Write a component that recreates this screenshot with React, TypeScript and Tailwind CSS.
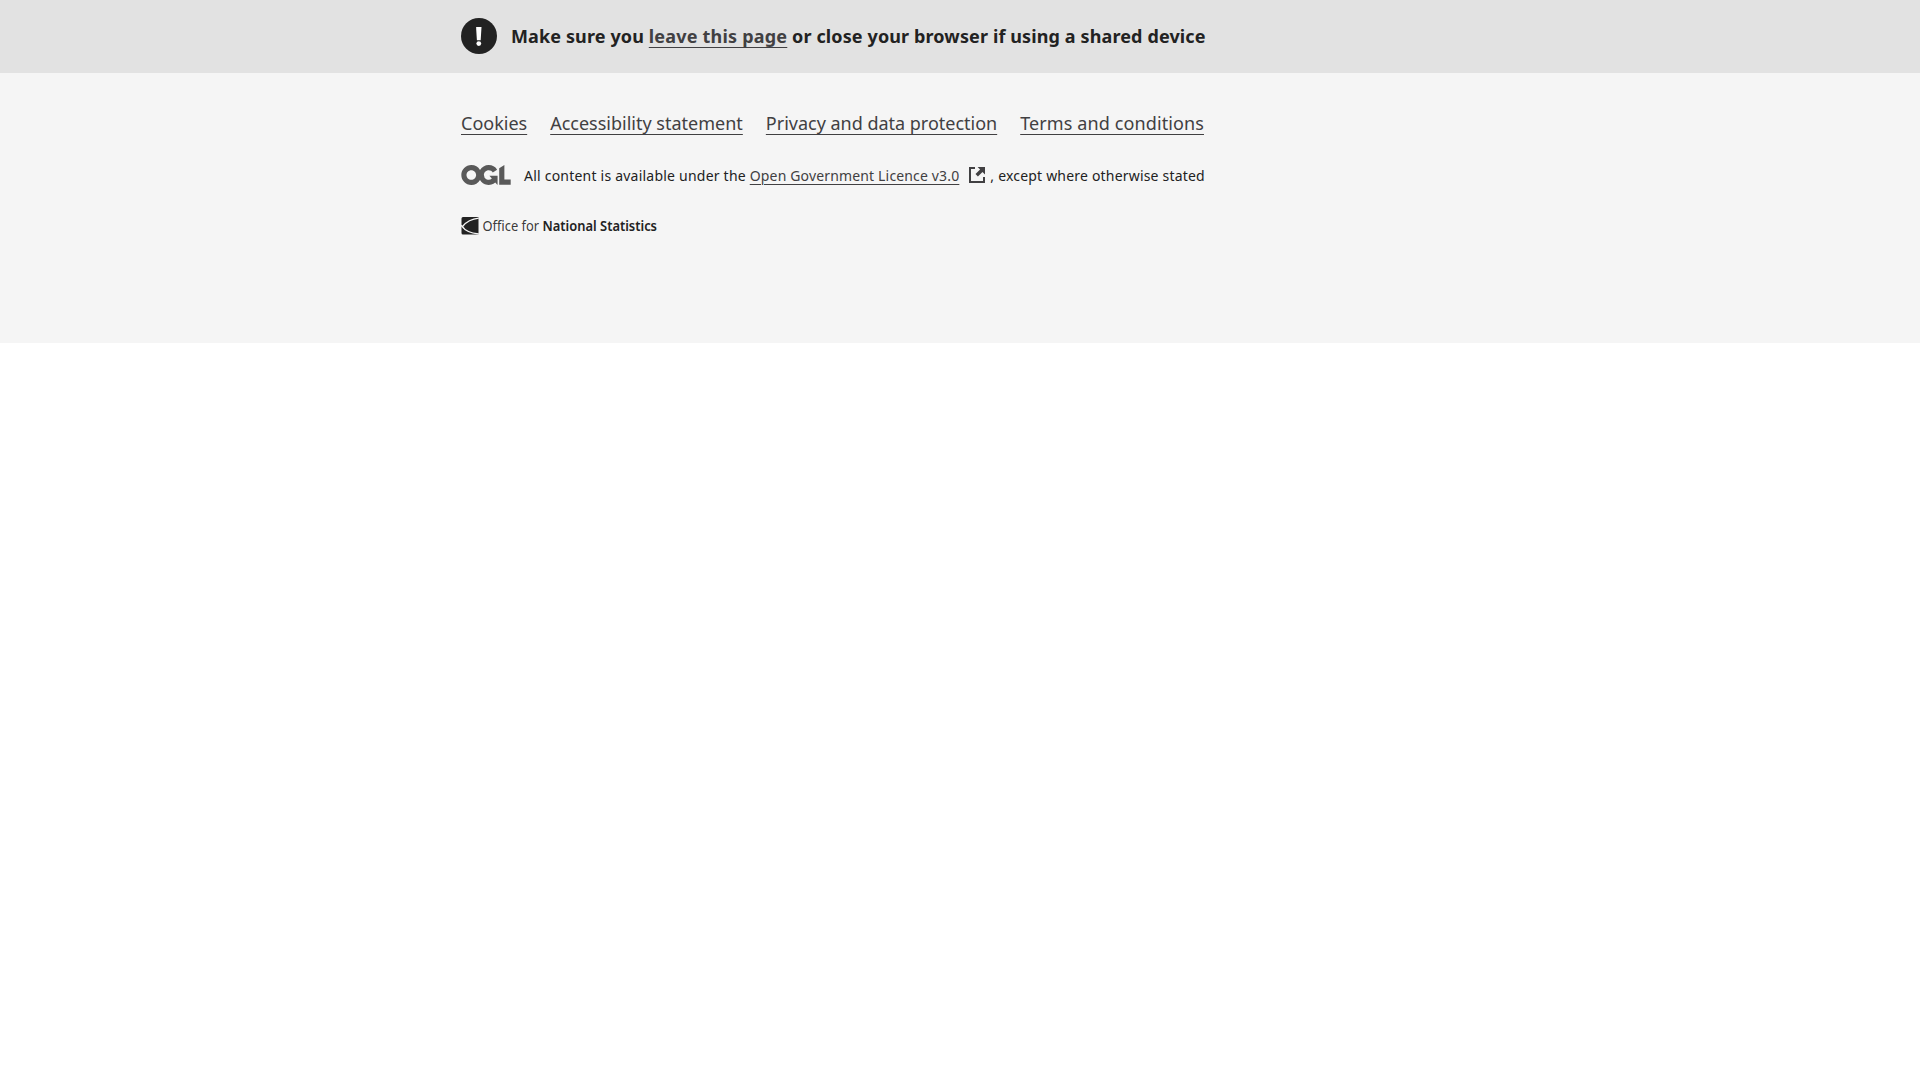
const link = 'text-[#414042] underline decoration-1';

function AlertIcon() {
  return (
    <span className="flex h-9 w-9 shrink-0 items-center justify-center rounded-full bg-[#222222] text-white">
      <svg width="36" height="36" viewBox="0 0 36 36" fill="currentColor" aria-hidden="true">
        <path d="M15.1 9h5.4l-.8 13.3h-3.8z" />
        <circle cx="17.8" cy="25.6" r="2.4" />
      </svg>
    </span>
  );
}

function OglLogo() {
  return (
    <svg className="h-[20px] w-[50px] shrink-0" viewBox="0 0 483.2 195.7" fill="#595959" aria-hidden="true">
      <path d="M421.5 142.8V.1l-50.7 32.3v161.1h112.4v-50.7zm-122.3-9.6A47.12 47.12 0 0 1 221 97.8c0-26 21.1-47.1 47.1-47.1 16.7 0 31.4 8.7 39.7 21.8l42.7-27.2A97.63 97.63 0 0 0 268.1 0c-36.5 0-68.3 20.1-85.1 49.7A98 98 0 0 0 97.8 0C43.9 0 0 43.9 0 97.8s43.9 97.8 97.8 97.8c36.5 0 68.3-20.1 85.1-49.7a97.76 97.76 0 0 0 149.6 25.4l19.4 22.2h3v-87.8h-80l24.3 27.5zM97.8 145c-26 0-47.1-21.1-47.1-47.1s21.1-47.1 47.1-47.1 47.1 21.1 47.1 47.1S123.8 145 97.8 145" />
    </svg>
  );
}

function ExternalIcon() {
  return (
    <svg className="ml-[10px] mr-[5px] inline-block h-4 w-4 align-[-2px]" viewBox="0 0 16 16" aria-hidden="true">
      <path d="M6 1H1v14h14v-5" fill="none" stroke="#414042" strokeWidth="2" />
      <path d="M8.6 0H16v7.4l-2.5-2.5-4.6 4.6-2.4-2.4 4.6-4.6z" fill="#414042" />
    </svg>
  );
}

function OnsLogo() {
  return (
    <svg className="block h-[36px] w-[240px] overflow-visible" viewBox="0 -10 240 36" fill="#222222" role="img" aria-label="Office for National Statistics">
      <path d="M2 0h15.5v17.5H2A1.5 1.5 0 0 1 .5 16V1.5A1.5 1.5 0 0 1 2 0z" />
      <path d="M17.8 1.2C10.5 2 5 5.2 1.5 9.5c2 3.8 8 6.5 16.3 7.5M0 8.300l3 3.200" fill="none" stroke="#f5f5f5" strokeWidth="1.3" />
      <text x="21.5" y="14" fontFamily="'Noto Sans', sans-serif" fontSize="15" fontWeight="400" fillOpacity="0.9" textLength="56.5" lengthAdjust="spacingAndGlyphs">Office for</text>
      <text x="81.5" y="14" fontFamily="'Noto Sans', sans-serif" fontSize="15" fontWeight="600" textLength="114.5" lengthAdjust="spacingAndGlyphs">National Statistics</text>
    </svg>
  );
}

const links = [
  { label: 'Cookies', tracking: 'tracking-normal' },
  { label: 'Accessibility statement', tracking: 'tracking-normal' },
  { label: 'Privacy and data protection', tracking: 'tracking-[-0.01px]' },
  { label: 'Terms and conditions', tracking: 'tracking-[0.11px]' },
];

export default function App() {
  return (
    <div className="min-h-screen bg-white font-['Noto_Sans',sans-serif] text-[#222222]">
      <div className="h-[73px] bg-[#e2e2e2]">
        <div className="mx-auto flex h-[72px] w-[998px] items-center gap-[14px]">
          <AlertIcon />
          <p className="text-[18px] font-bold leading-7 tracking-[0.12px]">
            Make sure you <a href="#" className={`${link} underline-offset-[4px] tracking-[0.2px]`}>leave this page</a> or close your browser if using a shared device
          </p>
        </div>
      </div>
      <footer className="h-[270px] bg-[#f5f5f5] pt-9">
        <div className="mx-auto w-[998px]">
          <ul className="flex gap-[23px] text-[18px] leading-7">
            {links.map(({ label, tracking }) => (
              <li key={label} className={tracking}><a href="#" className={`${link} underline-offset-[4px]`}>{label}</a></li>
            ))}
          </ul>
          <div className="mt-6 flex h-7 items-center gap-[13px] text-[14px] tracking-[0.22px]">
            <OglLogo />
            <p>
              All content is available under the <a href="#" className={`${link} underline-offset-[3px] tracking-[0.155px]`}>Open Government Licence v3.0</a>
              <ExternalIcon />, <span className="tracking-[0.19px]">except where otherwise stated</span>
            </p>
          </div>
          <div className="mt-[18px]"><OnsLogo /></div>
        </div>
      </footer>
    </div>
  );
}
